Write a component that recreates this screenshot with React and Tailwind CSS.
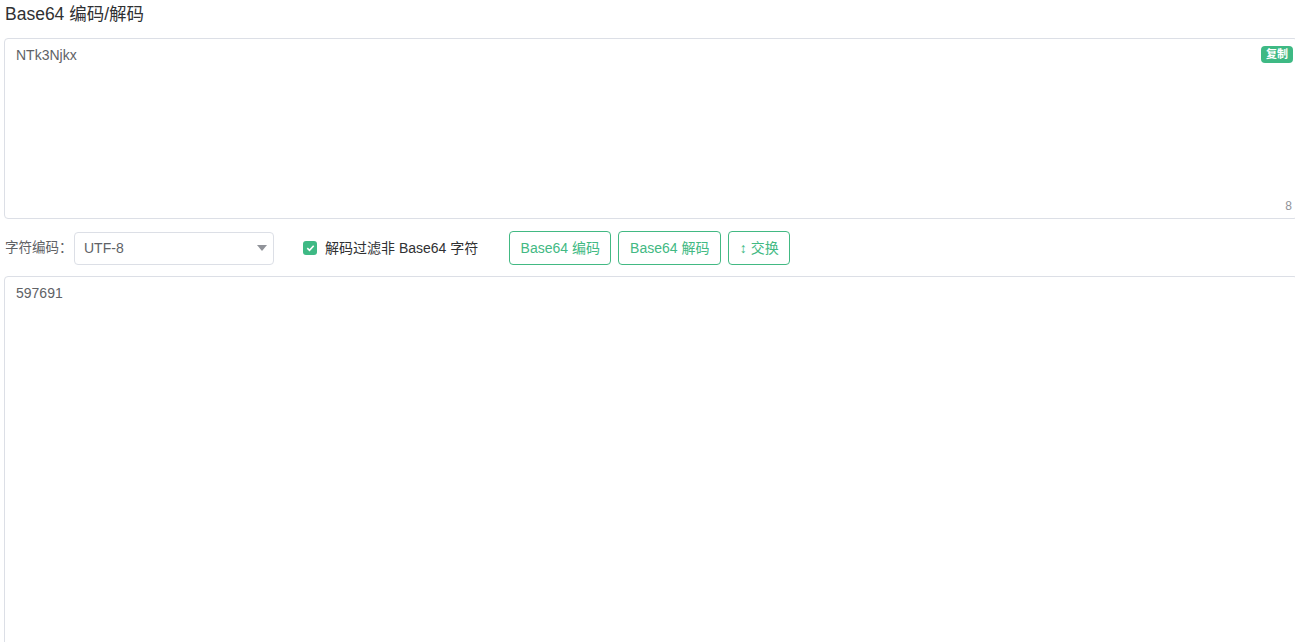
import React from "react";

const font = { fontFamily: '"Liberation Sans", "Noto Sans CJK SC", sans-serif' };

function OutlineButton({ children, className = "" }) {
  return (
    <button
      className={`h-[34px] rounded-[4px] border border-[#42b983] bg-white px-[10px] text-[14px] text-[#42b983] ${className}`}
    >
      {children}
    </button>
  );
}

export default function App() {
  return (
    <div className="w-screen h-screen overflow-hidden bg-white text-[#606266]" style={font}>
      <div className="w-[1300px] pl-1">
        <h1 className="pl-[1px] pt-[3px] text-[17.5px] leading-[22px] text-[#303133]">Base64 编码/解码</h1>

        <div className="relative mt-[13px] h-[181px] w-[1294px]">
          <textarea
            readOnly
            defaultValue="NTk3Njkx"
            className="h-full w-full resize-none rounded-[4px] border border-[#dcdfe6] bg-white px-[11px] py-[6px] text-[14px] leading-[20px] text-[#606266] outline-none"
            style={font}
          />
          <span className="absolute right-[5px] top-[8px] rounded-[4px] bg-[#3eb984] px-[5px] text-[11px] font-bold leading-[17px] text-white">
            复制
          </span>
          <span className="absolute bottom-[6px] right-[6px] text-[12px] leading-[14px] text-[#909399]">8</span>
        </div>

        <div className="mt-[12px] flex h-[34px] items-center">
          <span className="w-[70px] pl-[1px] text-[13.5px]">字符编码：</span>
          <div className="flex h-[33px] w-[200px] items-center justify-between rounded-[4px] border border-[#dcdfe6] pl-[9px] pr-[6px]">
            <span className="text-[14px]">UTF-8</span>
            <svg width="10" height="6" viewBox="0 0 10 6">
              <path d="M0 0h10L5 6z" fill="#909399" />
            </svg>
          </div>
          <label className="ml-[29px] flex items-center">
            <span className="flex h-[14px] w-[14px] items-center justify-center rounded-[3px] bg-[#3eb984]">
              <svg width="9" height="8" viewBox="0 0 9 8">
                <path d="M1.3 4.2l2.2 2.1 4.2-4.6" stroke="#fff" strokeWidth="1.6" fill="none" />
              </svg>
            </span>
            <span className="ml-[8px] text-[14px] text-[#303133]">解码过滤非 Base64 字符</span>
          </label>
          <OutlineButton className="ml-[31px] w-[102px]">Base64 编码</OutlineButton>
          <OutlineButton className="ml-[7px] w-[103px]">Base64 解码</OutlineButton>
          <OutlineButton className="ml-[7px] w-[62px]">↕ 交换</OutlineButton>
        </div>

        <div className="mt-[11px] h-[400px] w-[1294px]">
          <textarea
            readOnly
            defaultValue="597691"
            className="h-full w-full resize-none rounded-[4px] border border-[#dcdfe6] bg-white px-[11px] py-[6px] text-[14px] leading-[20px] text-[#606266] outline-none"
            style={font}
          />
        </div>
      </div>
    </div>
  );
}
